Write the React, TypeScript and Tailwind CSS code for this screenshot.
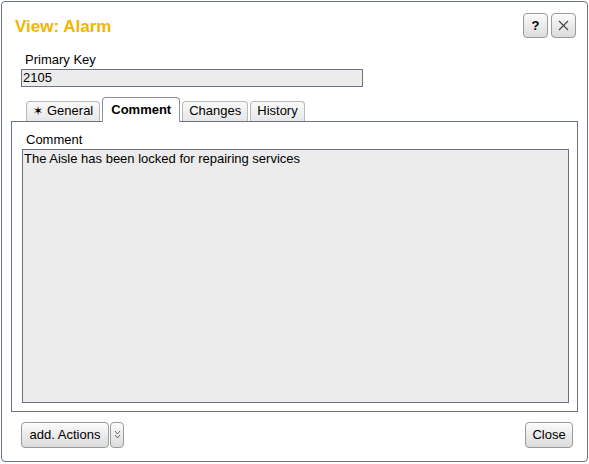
import React from 'react';

const font = "font-['Liberation_Sans',Arial,sans-serif]";

const btn =
  'flex items-center justify-center rounded-[4px] border border-[#9a9a9a] bg-gradient-to-b from-[#fbfbfb] to-[#dcdcdc] text-[13px] text-black shadow-[inset_0_1px_0_#fff]';

const Tab = ({ label, active, star }: { label: string; active?: boolean; star?: boolean }) => (
  <div
    className={
      active
        ? 'relative z-[1] -mb-px flex h-[25px] items-center rounded-t-[4px] border border-b-0 border-[#8a90a2] bg-white px-[8px] text-[13px] font-bold'
        : 'flex h-[20px] items-center gap-[4px] rounded-t-[4px] border border-b-0 border-[#b9b9b9] bg-gradient-to-b from-[#fafafa] to-[#e6e6e6] px-[6px] text-[13px]'
    }
  >
    {star && <span className="text-[12px] leading-none">✶</span>}
    {label}
  </div>
);

export default function App() {
  return (
    <div className={`${font} h-[464px] w-[589px] bg-white p-[1px] text-black`}>
      <div className="flex h-[461px] w-[587px] flex-col rounded-[4px] border border-[#6b7389] bg-white">
        <div className="flex items-start justify-between pl-[13px] pr-[11px] pt-[11px]">
          <div className="pt-[1px] text-[17px] font-bold text-[#f2b600]">View: Alarm</div>
          <div className="flex gap-[3px]">
            <div className={`${btn} h-[25px] w-[25px] font-bold`}>?</div>
            <div className={`${btn} h-[25px] w-[25px]`}>
              <svg width="11" height="11" viewBox="0 0 11 11">
                <path d="M1 1 L10 10 M10 1 L1 10" stroke="#444" strokeWidth="1.1" />
              </svg>
            </div>
          </div>
        </div>

        <div className="px-[19px] pt-[12px]">
          <div className="pl-[4px] text-[13px] leading-[16px]">Primary Key</div>
          <div className="mt-[1px] h-[18px] w-[342px] border border-[#6b7389] bg-[#ececec] pl-[1px] text-[13px] leading-[16px]">
            2105
          </div>
        </div>

        <div className="flex items-end gap-[2px] pl-[24px] pt-[10px]">
          <Tab label="General" star />
          <Tab label="Comment" active />
          <Tab label="Changes" />
          <Tab label="History" />
        </div>

        <div className="mx-[9px] flex h-[291px] flex-col border border-[#6b7389] pb-[8px] pl-[10px] pr-[8px] pt-[10px]">
          <div className="pl-[4px] text-[13px] leading-[16px]">Comment</div>
          <div className="mt-[1px] flex-1 border border-[#6b7389] bg-[#ececec] pl-[1px] text-[13px] leading-[17px]">
            The Aisle has been locked for repairing services
          </div>
        </div>

        <div className="flex items-center justify-between pl-[19px] pr-[14px] pt-[10px]">
          <div className="flex gap-[1px]">
            <div className={`${btn} h-[26px] w-[88px]`}>add. Actions</div>
            <div className={`${btn} h-[26px] w-[14px]`}>
              <svg width="7" height="9" viewBox="0 0 7 9">
                <path d="M1 1 L3.5 4 L6 1 M1 5 L3.5 8 L6 5" stroke="#555" strokeWidth="0.9" fill="none" />
              </svg>
            </div>
          </div>
          <div className={`${btn} h-[26px] w-[48px]`}>Close</div>
        </div>
      </div>
    </div>
  );
}
